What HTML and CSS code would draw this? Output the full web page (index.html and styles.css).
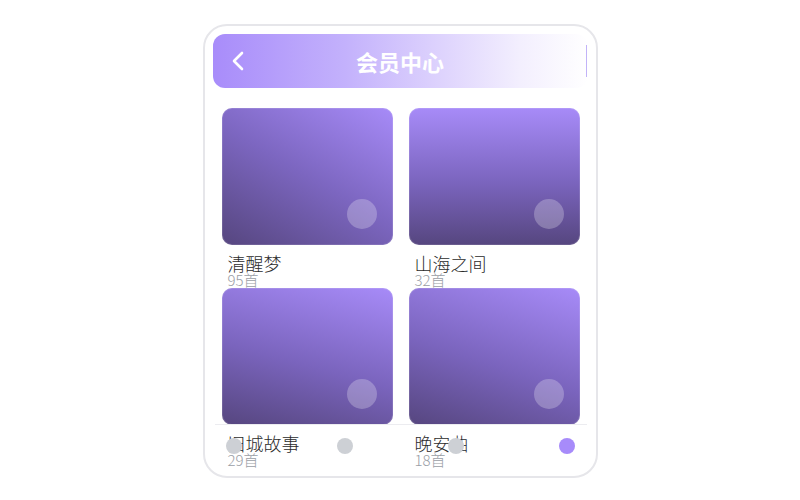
FILE: index.html
```html
<!DOCTYPE html>
<html lang="zh">
<head>
<meta charset="utf-8">
<title>会员中心</title>
<link rel="stylesheet" href="styles.css">
</head>
<body>
<div class="phone">
  <header class="topbar">
    <svg class="back" width="24" height="24" viewBox="0 0 24 24"><polyline points="15,4 7,12 15,20" fill="none" stroke="#fff" stroke-width="2.6" stroke-linecap="round" stroke-linejoin="round"/></svg>
    <h1 class="title">会员中心</h1>
    <span class="edge"></span>
  </header>
  <main class="grid">
    <div class="item">
      <div class="cover cover-a"><span class="play"></span></div>
      <div class="name">清醒梦</div>
      <div class="count">95首</div>
    </div>
    <div class="item">
      <div class="cover cover-b"><span class="play"></span></div>
      <div class="name">山海之间</div>
      <div class="count">32首</div>
    </div>
    <div class="item">
      <div class="cover cover-c"><span class="play"></span></div>
      <div class="name">旧城故事</div>
      <div class="count">29首</div>
    </div>
    <div class="item">
      <div class="cover cover-d"><span class="play"></span></div>
      <div class="name">晚安曲</div>
      <div class="count">18首</div>
    </div>
  </main>
  <nav class="tabbar">
    <span class="dot"></span>
    <span class="dot"></span>
    <span class="dot"></span>
    <span class="dot dot-active"></span>
  </nav>
</div>
</body>
</html>
```
FILE: styles.css
```css
* { box-sizing: border-box; }
html, body { margin: 0; padding: 0; background: #fff; }
body {
  font-family: "Noto Sans CJK SC", "Noto Sans", sans-serif;
  display: flex;
  justify-content: center;
  padding-top: 24px;
}
.phone {
  position: relative;
  width: 395px;
  height: 454px;
  border: 2px solid #e6e6ea;
  border-radius: 24px;
  padding: 8px 7px 0 8px;
  overflow: hidden;
  background: #fff;
}
.topbar {
  position: relative;
  height: 54px;
  width: 375px;
  border-radius: 12px;
  background: linear-gradient(90deg, #a88cfa 0%, #c3b1fc 35%, #ddd2fd 60%, #f3effe 82%, #ffffff 100%);
  display: flex;
  align-items: center;
  justify-content: center;
}
.back {
  position: absolute;
  left: 14px;
  top: 15px;
}
.title {
  margin: 0;
  color: #fff;
  font-size: 22px;
  line-height: 28px;
  font-weight: 700;
}
.edge {
  position: absolute;
  right: 1px;
  top: 11px;
  bottom: 11px;
  width: 1px;
  background: #c2b3f8;
}
.grid {
  margin-top: 20px;
  padding: 0 9px;
  display: grid;
  grid-template-columns: 1fr 1fr;
  grid-auto-rows: 164px;
  column-gap: 16px;
  row-gap: 16px;
}
.item { min-width: 0; }
.cover {
  position: relative;
  height: 137px;
  border-radius: 10px;
  box-shadow: inset 0 0 0 1px rgba(255,255,255,0.12);
}
.cover-a { background: linear-gradient(210deg, #a78bf8 0%, #7c66c0 50%, #56467f 100%); }
.cover-b { background: linear-gradient(180deg, #a78bf8 0%, #7a64bd 55%, #56467f 100%); }
.cover-c { background: linear-gradient(195deg, #a78bf8 0%, #7a64bd 55%, #56467f 100%); }
.cover-d { background: linear-gradient(198deg, #a78bf8 0%, #7a64bd 55%, #56467f 100%); }
.play {
  position: absolute;
  right: 16px;
  bottom: 16px;
  width: 30px;
  height: 30px;
  border-radius: 50%;
  background: rgba(255,255,255,0.25);
}
.name {
  margin-top: 9px;
  padding-left: 6px;
  font-size: 18px;
  line-height: 18px;
  font-weight: 300;
  color: #2b2b2b;
  white-space: nowrap;
}
.count {
  padding-left: 6px;
  font-size: 15px;
  line-height: 15px;
  font-weight: 300;
  color: #9a9ea6;
  white-space: nowrap;
}
.tabbar {
  position: absolute;
  left: 10px;
  right: 9px;
  top: 398px;
  bottom: 0;
  border-top: 1px solid #ececf0;
  padding: 13px 11px 0;
  display: flex;
  justify-content: space-between;
  align-items: flex-start;
}
.dot {
  width: 16px;
  height: 16px;
  border-radius: 50%;
  background: #cdd0d5;
}
.dot-active { background: #a78bfa; }
```
